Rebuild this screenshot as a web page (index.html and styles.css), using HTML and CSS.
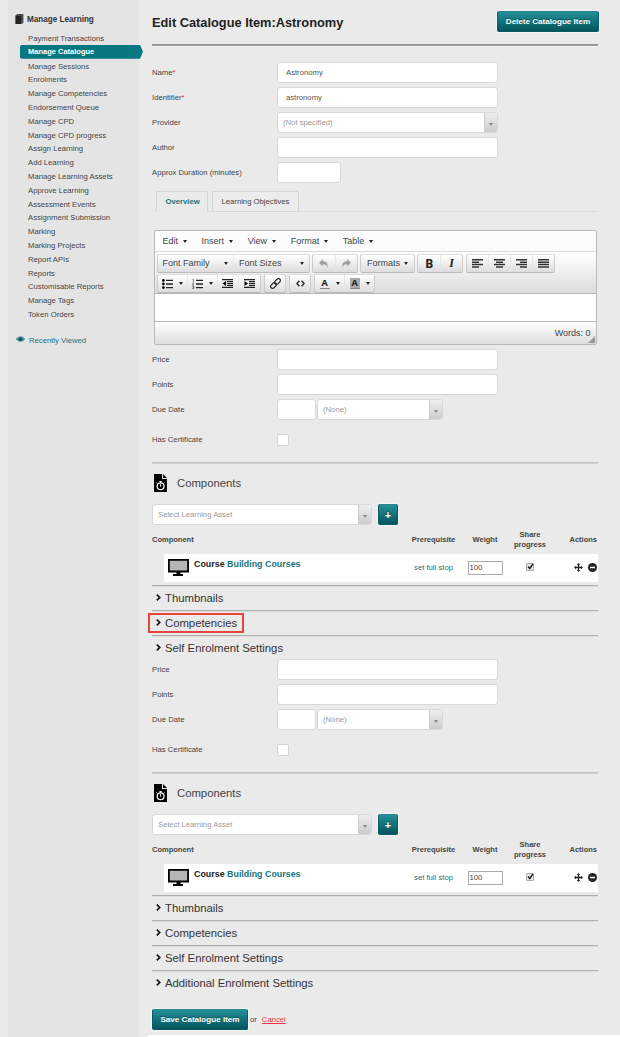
FILE: index.html
```html
<!DOCTYPE html>
<html lang="en">
<head>
<meta charset="utf-8">
<title>Edit Catalogue Item</title>
<link rel="stylesheet" href="styles.css">
</head>
<body>
<svg class="defs" width="0" height="0">
  <symbol id="doc" viewBox="0 0 13 18"><path d="M0 0h8v5h5v13H0z" fill="#000"/><path d="M9 0l4 4H9z" fill="#000"/><circle cx="6.6" cy="12.2" r="3.4" fill="none" stroke="#fff" stroke-width="1.2"/><path d="M5.4 7.6h2.4M6.6 7.6v1.4M6.6 10.2v2.4M3.3 9.3l-.8-.8M9.9 9.3l.8-.8" stroke="#fff" stroke-width="1" fill="none"/></symbol>
  <symbol id="monitor" viewBox="0 0 21 17"><path d="M.9.9h19.2v11.6H.9z" fill="#b5b5b5" stroke="#000" stroke-width="1.8"/><path d="M8.5 13h4v2h2.500v2H5v-2h3.500z" fill="#000"/></symbol>
  <symbol id="move" viewBox="0 0 9 9"><path d="M4.500 1v7M1 4.500h7" stroke="#222" stroke-width="1.300"/><path d="M4.500 0l1.700 2H2.800zM4.500 9l1.700-2H2.800zM0 4.500l2-1.700v3.400zM9 4.500l-2-1.700v3.400z" fill="#222"/></symbol>
  <symbol id="minus" viewBox="0 0 9 9"><circle cx="4.500" cy="4.500" r="4.500" fill="#222"/><path d="M2 4.500h5" stroke="#fff" stroke-width="1.500"/></symbol>
  <symbol id="chev" viewBox="0 0 5 7"><path d="M.8.7l2.900 2.800L.8 6.300" fill="none" stroke="#111" stroke-width="1.700"/></symbol>
</svg>
<div class="page">
  <nav class="sidebar">
    <div class="side-title"><svg width="9" height="10" viewBox="0 0 9 10"><path d="M2 0h6.500v8.500L7 10H.5V1.500z" fill="#777"/><path d="M.5 1.500h6V10h-6z" fill="#222"/><path d="M2 .7h5.500V9" fill="none" stroke="#333" stroke-width=".8"/></svg>Manage Learning</div>
    <ul class="side-list">
      <li>Payment Transactions</li><li class="active"><span>Manage Catalogue</span></li><li>Manage Sessions</li><li>Enrolments</li><li>Manage Competencies</li><li>Endorsement Queue</li><li>Manage CPD</li><li>Manage CPD progress</li><li>Assign Learning</li><li>Add Learning</li><li>Manage Learning Assets</li><li>Approve Learning</li><li>Assessment Events</li><li>Assignment Submission</li><li>Marking</li><li>Marking Projects</li><li>Report APIs</li><li>Reports</li><li>Customisable Reports</li><li>Manage Tags</li><li>Token Orders</li>
    </ul>
    <div class="recent"><svg width="9" height="7" viewBox="0 0 9 7"><path d="M0 3.500Q4.500-1.500 9 3.500Q4.500 8 0 3.500z" fill="#4b959a"/><circle cx="4.500" cy="3.200" r="1.900" fill="#0b5d63"/><path d="M.2 2.800Q4.500-1.200 8.800 2.800" fill="none" stroke="#17747b" stroke-width=".8"/></svg>Recently Viewed</div>
  </nav>
  <main class="main">
    <header class="head"><h1>Edit Catalogue Item:Astronomy</h1><button class="btn delete">Delete Catalogue Item</button></header>
    <div class="fields first">
      <div class="row"><label>Name<i>*</i></label><div class="input">Astronomy</div></div>
      <div class="row"><label>Identifier<i>*</i></label><div class="input">astronomy</div></div>
      <div class="row"><label>Provider</label><div class="select wide"><span>(Not specified)</span><b></b></div></div>
      <div class="row"><label>Author</label><div class="input"></div></div>
      <div class="row"><label>Approx Duration (minutes)</label><div class="input mid"></div></div>
    </div>
    <div class="tabs"><div class="tab on">Overview</div><div class="tab">Learning Objectives</div></div>
    <section class="editor">
      <div class="menu"><span>Edit<em></em></span><span>Insert<em></em></span><span>View<em></em></span><span>Format<em></em></span><span>Table<em></em></span></div>
      <div class="tools">
        <div class="toolrow">
          <div class="group"><span class="tb family">Font Family<em></em></span><span class="tb sizes">Font Sizes<em></em></span></div>
          <div class="group"><span class="tb"><svg width="10" height="9" viewBox="0 0 10 9"><path d="M3.800 0v2.200C8 2.200 9.300 4.500 8.300 9 8 6.200 6.500 5.200 3.800 5.300v2.200L0 3.700z" fill="#a0a0a0"/></svg></span><span class="tb"><svg width="10" height="9" viewBox="0 0 10 9"><path d="M6.200 0v2.200C2 2.200.7 4.500 1.700 9 2 6.200 3.500 5.200 6.200 5.300v2.200L10 3.700z" fill="#a0a0a0"/></svg></span></div>
          <div class="group"><span class="tb formats">Formats<em></em></span></div>
          <div class="group"><span class="tb bold">B</span><span class="tb ital">I</span></div>
          <div class="group">
            <span class="tb"><svg width="11" height="9" viewBox="0 0 11 9"><path d="M0 .8h11M0 3.200h7M0 5.600h11M0 8h7" stroke="#333" stroke-width="1.500"/></svg></span>
            <span class="tb"><svg width="11" height="9" viewBox="0 0 11 9"><path d="M0 .8h11M2 3.200h7M0 5.600h11M2 8h7" stroke="#333" stroke-width="1.500"/></svg></span>
            <span class="tb"><svg width="11" height="9" viewBox="0 0 11 9"><path d="M0 .8h11M4 3.200h7M0 5.600h11M4 8h7" stroke="#333" stroke-width="1.500"/></svg></span>
            <span class="tb"><svg width="11" height="9" viewBox="0 0 11 9"><path d="M0 .8h11M0 3.200h11M0 5.600h11M0 8h11" stroke="#333" stroke-width="1.500"/></svg></span>
          </div>
        </div>
        <div class="toolrow">
          <div class="group">
            <span class="tb split"><svg width="11" height="10" viewBox="0 0 11 10"><path d="M4 1.300h7M4 5h7M4 8.700h7" stroke="#222" stroke-width="1.300"/><circle cx="1.400" cy="1.400" r="1.400"/><circle cx="1.400" cy="5" r="1.400"/><circle cx="1.400" cy="8.600" r="1.400"/></svg><em></em></span>
            <span class="tb split"><svg width="11" height="10" viewBox="0 0 11 10"><path d="M4 1.300h7M4 5h7M4 8.700h7" stroke="#222" stroke-width="1.300"/><path d="M.5.500h1v2.500M.3 4h1.400v.8L.4 6h1.500M.3 7.300h1.500v2.200H.3M.8 8.400h1" fill="none" stroke="#333" stroke-width=".6"/></svg><em></em></span>
            <span class="tb"><svg width="11" height="9" viewBox="0 0 11 9"><path d="M0 .6h11M5 2.600h6M5 4.500h6M5 6.400h6M0 8.400h11" stroke="#222" stroke-width="1.200"/><path d="M4 2v5L.5 4.500z"/></svg></span>
            <span class="tb"><svg width="11" height="9" viewBox="0 0 11 9"><path d="M0 .6h11M5 2.600h6M5 4.500h6M5 6.400h6M0 8.400h11" stroke="#222" stroke-width="1.200"/><path d="M.5 2v5L4 4.500z"/></svg></span>
          </div>
          <div class="group"><span class="tb single"><svg width="11" height="11" viewBox="0 0 11 11"><g fill="none" stroke="#222" stroke-width="1.200" transform="rotate(-45 5.500 5.500)"><rect x="-.6" y="3.600" width="6.600" height="3.800" rx="1.900"/><rect x="5" y="3.600" width="6.600" height="3.800" rx="1.900"/></g></svg></span></div>
          <div class="group"><span class="tb single"><svg width="9" height="7" viewBox="0 0 9 7"><path d="M3.400.7L.9 3.500l2.500 2.800M5.600.7l2.500 2.800-2.500 2.800" fill="none" stroke="#222" stroke-width="1.300"/></svg></span></div>
          <div class="group"><span class="tb split"><u class="fore">A</u><em></em></span><span class="tb split"><u class="back">A</u><em></em></span></div>
        </div>
      </div>
      <div class="canvas"></div>
      <div class="status">Words: 0<svg width="7" height="7" viewBox="0 0 7 7"><path d="M7 0v7H0z" fill="#999"/></svg></div>
    </section>

    <div class="fields">
      <div class="row"><label>Price</label><div class="input"></div></div>
      <div class="row"><label>Points</label><div class="input"></div></div>
      <div class="row"><label>Due Date</label><div class="input tiny"></div><div class="select due"><span>(None)</span><b></b></div></div>
      <div class="row cert"><label>Has Certificate</label><div class="check"></div></div>
    </div>
    <section class="components">
      <h2><svg width="13" height="18"><use href="#doc"/></svg>Components</h2>
      <div class="picker"><div class="select"><span>Select Learning Asset</span><b></b></div><button class="btn plus">+</button></div>
      <div class="grid thead"><span>Component</span><span>Prerequisite</span><span>Weight</span><span>Share progress</span><span>Actions</span></div>
      <div class="grid item"><div class="course"><svg width="21" height="17"><use href="#monitor"/></svg><p>Course <a>Building Courses</a></p></div><a class="stop">set full stop</a><div class="weight">100</div><div class="tick"><svg width="7" height="7" viewBox="0 0 7 7"><path d="M1 3.500l1.800 2L6 .8" fill="none" stroke="#222" stroke-width="1.500"/></svg></div><div class="acts"><svg width="9" height="9"><use href="#move"/></svg><svg width="9" height="9"><use href="#minus"/></svg></div></div>
    </section>
    <div class="fold"><svg width="5" height="7"><use href="#chev"/></svg>Thumbnails</div>
    <div class="fold marked"><svg width="5" height="7"><use href="#chev"/></svg>Competencies</div>
    <div class="fold open"><svg width="5" height="7"><use href="#chev"/></svg>Self Enrolment Settings</div>

    <div class="fields">
      <div class="row"><label>Price</label><div class="input"></div></div>
      <div class="row"><label>Points</label><div class="input"></div></div>
      <div class="row"><label>Due Date</label><div class="input tiny"></div><div class="select due"><span>(None)</span><b></b></div></div>
      <div class="row cert"><label>Has Certificate</label><div class="check"></div></div>
    </div>
    <section class="components">
      <h2><svg width="13" height="18"><use href="#doc"/></svg>Components</h2>
      <div class="picker"><div class="select"><span>Select Learning Asset</span><b></b></div><button class="btn plus">+</button></div>
      <div class="grid thead"><span>Component</span><span>Prerequisite</span><span>Weight</span><span>Share progress</span><span>Actions</span></div>
      <div class="grid item"><div class="course"><svg width="21" height="17"><use href="#monitor"/></svg><p>Course <a>Building Courses</a></p></div><a class="stop">set full stop</a><div class="weight">100</div><div class="tick"><svg width="7" height="7" viewBox="0 0 7 7"><path d="M1 3.500l1.800 2L6 .8" fill="none" stroke="#222" stroke-width="1.500"/></svg></div><div class="acts"><svg width="9" height="9"><use href="#move"/></svg><svg width="9" height="9"><use href="#minus"/></svg></div></div>
    </section>
    <div class="fold"><svg width="5" height="7"><use href="#chev"/></svg>Thumbnails</div>
    <div class="fold"><svg width="5" height="7"><use href="#chev"/></svg>Competencies</div>
    <div class="fold"><svg width="5" height="7"><use href="#chev"/></svg>Self Enrolment Settings</div>
    <div class="fold"><svg width="5" height="7"><use href="#chev"/></svg>Additional Enrolment Settings</div>
    <footer class="foot"><button class="btn save">Save Catalogue Item</button><span>or</span><a>Cancel</a></footer>
  </main>
</div>
</body>
</html>
```

FILE: styles.css
```css
* { box-sizing: border-box; }
body { margin: 0; background: #eaeaea; color: #444; font: 7.7px/10px "Liberation Sans", Arial, sans-serif; }
.defs { position: absolute; }
svg { display: block; flex: none; }
.page { display: flex; height: 1037px; padding-left: 8px; overflow: hidden; }

.sidebar { width: 131px; flex: none; background: #e4e4e4; padding-top: 13px; }
.side-title { display: flex; align-items: center; gap: 3px; height: 13px; padding-left: 7px; font-size: 8.15px; font-weight: bold; color: #333; }
.side-title svg { margin-bottom: 2px; }
.side-list { list-style: none; margin: 5px 0 0; padding: 0; }
.side-list li { height: 13.81px; line-height: 15px; padding-left: 20px; white-space: nowrap; }
.side-list .active { padding-left: 12px; }
.active span { display: block; width: 123px; height: 14px; line-height: 14px; padding-left: 8px; background: #08777f; color: #fff; font-size: 7.5px; font-weight: bold; border-radius: 2px 0 0 2px; clip-path: polygon(0 0, 120px 0, 123px 50%, 120px 100%, 0 100%); }
.recent { display: flex; align-items: center; gap: 4px; margin-top: 15px; padding-left: 8px; color: #17747b; }
.recent svg { margin-bottom: 2px; }

.main { width: 446px; margin-left: 13px; flex: none; }
.head { display: flex; justify-content: space-between; align-items: flex-start; height: 46px; border-bottom: 2px solid #999; box-shadow: 0 1px #f5f5f5; }
h1 { margin: 15px 0 0; font-size: 12.8px; line-height: 15px; color: #222; }
.btn { display: block; padding: 0; border: 1px solid #075c63; border-top-color: #2b858b; border-radius: 2px; background: linear-gradient(#24909a, #03545c); box-shadow: 0 0 1px 1px #f4f4f4; color: #fff; font: bold 8.08px/18px "Liberation Sans", Arial, sans-serif; height: 21px; text-align: center; white-space: nowrap; text-shadow: 0 -1px #055; }
.delete { width: 102px; margin-top: 11px; margin-right: -1px; }

.first { padding-top: 14px; }
.row { display: flex; height: 25px; align-items: center; }
label { width: 125px; white-space: nowrap; }
label i { color: #f22; font-style: normal; }
.input, .select { height: 21px; border: 1px solid #d8d8d8; border-radius: 3px; background: #fff; }
.input { width: 221px; padding-left: 8px; line-height: 20px; color: #555; }
.mid { width: 64px; }
.tiny { width: 39px; margin-right: 1px; }
.select { display: flex; color: #999; line-height: 20px; padding-left: 5px; overflow: hidden; }
.select span { flex: 1; }
.select b { width: 13px; display: flex; align-items: center; justify-content: center; border-left: 1px solid #ccc; background: linear-gradient(#eee, #ccc); }
.select b::after { content: ""; margin-top: 3px; border: 2px solid transparent; border-top: 3px solid #888; border-bottom: 0; }
.wide { width: 221px; }
.due { width: 126px; }
.cert { margin-top: 5px; }
.check { width: 12px; height: 12px; border: 1px solid #d4d4d4; border-radius: 2px; background: #fff; }

.tabs { display: flex; gap: 4px; height: 21px; margin-top: 6px; padding-left: 4px; background: linear-gradient(#dcdcdc, #dcdcdc) 2px 100% / 444px 1px no-repeat; }
.tab { height: 21px; border: 1px solid #d5d5d5; border-radius: 2px 2px 0 0; padding: 0 8.5px; line-height: 19px; background: #ececec; white-space: nowrap; width: 87px; }
.tab.on { width: 52px; color: #17747b; font-weight: bold; border-bottom-color: #eaeaea; background: #eaeaea; }

.editor { width: 443px; height: 115px; margin: 18px 0 2px 1.5px; border: 1px solid #b8b8b8; border-radius: 2px; background: #fff; font-size: 9px; color: #444; }
.menu { display: flex; gap: 14.6px; height: 21px; padding-left: 8px; line-height: 21px; background: #fcfcfc; border-bottom: 1px solid #ddd; }
.menu span { display: flex; align-items: center; gap: 5px; }
em { display: block; flex: none; border: 2.5px solid transparent; border-top: 3px solid #222; border-bottom: 0; }
.tools { height: 42px; padding: 2px; background: linear-gradient(#fff, #ddd); border-bottom: 1px solid #b8b8b8; }
.toolrow { display: flex; gap: 2.5px; height: 20px; }
.group { display: flex; height: 19px; border: 1px solid #d2d2d2; border-color: #ddd #ccc #bbb; border-radius: 2px; background: linear-gradient(#fff, #ddd); }
.tb { display: flex; align-items: center; justify-content: center; width: 21.9px; line-height: 17px; white-space: nowrap; }
.tb + .tb { border-left: 1px solid #e6e6e6; }
.family, .sizes { justify-content: space-between; padding: 0 5px; width: 75.5px; }
.formats { width: 52.5px; gap: 4px; }
.split { width: 29.5px; gap: 6px; }
.single { width: 20.5px; }
.bold { font: bold 12px/17px "Noto Sans", sans-serif; color: #222; }
.ital { font: italic bold 12px/17px "Liberation Serif", serif; color: #222; }
.fore, .back { width: 10px; height: 11px; text-align: center; text-decoration: none; font: bold 9px/10px "Noto Sans", sans-serif; color: #222; border-bottom: 1px solid #888; }
.back { background: #aaa; }
.canvas { height: 27px; }
.status { display: flex; justify-content: flex-end; height: 23px; padding-right: 1px; border-top: 1px solid #b8b8b8; background: linear-gradient(#fff, #ddd); line-height: 22px; }
.status svg { margin: 14px 0 0 -3px; }

.components { margin-top: 10px; height: 123px; border-top: 1px solid #c2c2c2; box-shadow: inset 0 1px #d0d0d0; }
h2 { display: flex; align-items: center; gap: 10px; margin: 0; padding: 10px 0 0 2px; height: 30px; font-size: 11.3px; font-weight: normal; line-height: 18px; }
.picker { display: flex; gap: 6px; margin-top: 11px; }
.picker .select { width: 220px; }
.plus { width: 20px; font-size: 11px; }
.grid { display: grid; grid-template-columns: 254px 55px 48px 42px 47px; align-items: center; justify-items: center; }
.thead { height: 29px; font-size: 7.5px; font-weight: bold; text-align: center; }
.thead span:first-child { justify-self: start; }
.thead span:last-child { justify-self: end; margin-right: 1px; }
.item { height: 28px; margin-left: 12px; grid-template-columns: 242px 55px 48px 42px 47px; background: #fff; }
.course { display: flex; align-items: flex-start; gap: 5px; justify-self: start; height: 20px; padding-left: 4px; padding-top: 1px; }
.course p { margin: 0; font-size: 8.9px; font-weight: bold; color: #222; }
.course a, .stop { color: #17747b; }
.weight { width: 35px; height: 14px; border: 1px solid #aaa; padding-left: 1px; line-height: 12px; }
.tick { width: 8px; height: 8px; margin-bottom: 3px; border: 1px solid #aaa; background: #e8e8e8; border-radius: 1px; }
.tick svg { margin: -.5px; }
.acts { display: flex; gap: 5px; justify-self: end; margin: 0 1px 2px 0; }

.fold { display: flex; align-items: center; gap: 4px; height: 25px; padding-left: 4px; border-top: 1px solid #b0b0b0; box-shadow: inset 0 1px #dcdcdc; font-size: 11.3px; line-height: 18px; color: #333; }
.fold svg { margin-bottom: 1px; }
.open { height: 22px; align-items: flex-start; padding-top: 3px; }
.open svg { margin-top: 5px; }
.marked { position: relative; }
.marked::after { content: ""; box-sizing: border-box; position: absolute; left: -4px; top: 2px; width: 96px; height: 20px; border: 2px solid #e8443c; }
.foot { display: flex; align-items: center; height: 33px; margin: 9px -22px 0 -4px; padding: 4px 0 4px 4px; border-bottom: 2px solid #fff; }
.save { width: 96px; }
.foot span { margin-left: 2px; }
.foot a { margin-left: 5px; color: #f2334c; text-decoration: underline; }
```
